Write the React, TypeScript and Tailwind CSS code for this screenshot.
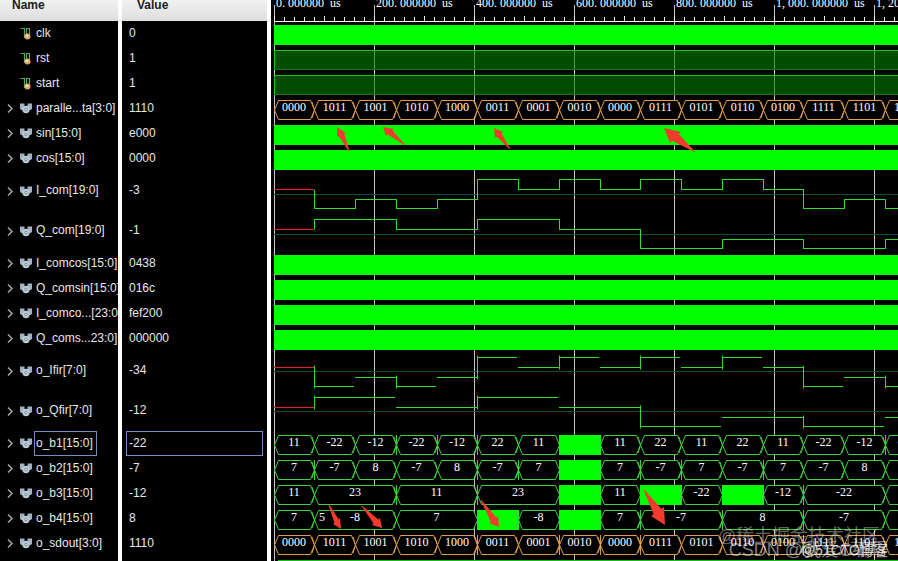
import type { ReactNode } from 'react';

const GREEN = '#00ff00';
const TRACE = '#3fd03f';
const ORANGE = '#dc9c48';

// Horizontal positions (px) where the symbols change.
const EDGES = [0, 40, 81, 122, 163, 203, 244, 285, 326, 366, 407, 448, 489, 529, 570, 611, 652];

interface Cell {
  // number of symbols the value is held for
  span: number;
  text?: string;
  burst?: boolean;
}

interface Signal {
  name: string;
  value: string;
  kind: 'clock' | 'high' | 'bus' | 'analog';
  scalar?: boolean;
  selected?: boolean;
  color?: string;
  cells?: Cell[];
  glitches?: number[];
  levels?: number[];
  breaks?: number[];
  offset?: number;
  note?: { x: number; text: string };
}

// '*' marks a burst of changes, 'value:n' holds a value for n symbols
function parseCells(source: string): Cell[] {
  return source.split(' ').map((item) => {
    const [text, span] = item.split(':');
    return text === '*' ? { span: 1, burst: true } : { span: Number(span ?? 1), text };
  });
}

const SYMBOLS = '0000 1011 1001 1010 1000 0011 0001 0010 0000 0111 0101 0110 0100 1111 1101 1110';
const I_LEVELS = [18, 37, 28, 37, 28, 8, 18, 8, 18, 8, 18, 8, 18, 37, 28, 37];
const Q_LEVELS = [18, 8, 8, 18, 18, 8, 8, 18, 18, 37, 37, 28, 28, 37, 37, 28];

const signals: Signal[] = [
  { name: 'clk', value: '0', kind: 'clock', scalar: true },
  { name: 'rst', value: '1', kind: 'high', scalar: true },
  { name: 'start', value: '1', kind: 'high', scalar: true },
  { name: 'paralle...ta[3:0]', value: '1110', kind: 'bus', color: ORANGE, cells: parseCells(SYMBOLS) },
  { name: 'sin[15:0]', value: 'e000', kind: 'clock' },
  { name: 'cos[15:0]', value: '0000', kind: 'clock' },
  { name: 'I_com[19:0]', value: '-3', kind: 'analog', levels: I_LEVELS },
  { name: 'Q_com[19:0]', value: '-1', kind: 'analog', levels: Q_LEVELS },
  { name: 'I_comcos[15:0]', value: '0438', kind: 'clock' },
  { name: 'Q_comsin[15:0]', value: '016c', kind: 'clock' },
  { name: 'I_comco...[23:0]', value: 'fef200', kind: 'clock' },
  { name: 'Q_coms...23:0]', value: '000000', kind: 'clock' },
  { name: 'o_Ifir[7:0]', value: '-34', kind: 'analog', levels: I_LEVELS, offset: -2, breaks: [81, 163, 244, 326, 407, 489, 570] },
  { name: 'o_Qfir[7:0]', value: '-12', kind: 'analog', levels: Q_LEVELS, offset: -2, breaks: [122, 285, 448, 611] },
  {
    name: 'o_b1[15:0]', value: '-22', kind: 'bus', selected: true, glitches: [122, 163, 203, 611],
    cells: parseCells('11 -22 -12 -22 -12 22 11 * 11 22 11 22 11 -22 -12 -22'),
  },
  {
    name: 'o_b2[15:0]', value: '-7', kind: 'bus', glitches: [40, 203, 244, 366, 407, 489],
    cells: parseCells('7 -7 8 -7 8 -7 7 * 7 -7 7 -7 7 -7 8 -7'),
  },
  {
    name: 'o_b3[15:0]', value: '-12', kind: 'bus', glitches: [122, 203, 529],
    cells: parseCells('11 23:2 11:2 23:2 * 11 * -22 * -12 -22:2 11'),
  },
  {
    name: 'o_b4[15:0]', value: '8', kind: 'bus', glitches: [366, 448, 529], note: { x: 48, text: '5' },
    cells: parseCells('7 -8:2 7:2 * -8 * 7 -7:2 8:2 -7:2 8'),
  },
  {
    name: 'o_sdout[3:0]', value: '1110', kind: 'bus', color: ORANGE, glitches: [203, 285, 326, 366, 529],
    cells: parseCells(SYMBOLS),
  },
];

const rowHeight = (signal: Signal) => (signal.kind === 'analog' ? 'h-10' : 'h-[25px]');

function ScalarIcon() {
  return (
    <svg width="12" height="13" viewBox="0 0 12 13" className="shrink-0" fill="none">
      <path d="M0.5 1.5H4.5V11M6.5 9V1.5H9.5V8" stroke="#5aa860" strokeWidth="1.2" />
      <circle cx="7.5" cy="9.5" r="3" fill="#e0a868" />
      <circle cx="7" cy="9" r="1.3" fill="#fbe3b8" />
    </svg>
  );
}

function BusIcon() {
  return (
    <svg width="12" height="13" viewBox="0 0 12 13" className="shrink-0">
      <path d="M0 1.5H4.5V8H1.5L0 7ZM7.5 1.5H12V7L10.5 8H7.5Z" fill="#9fb4c0" />
      <circle cx="6" cy="7.5" r="3.7" fill="#bccbd4" />
      <circle cx="6" cy="7.5" r="1.7" fill="#7d919d" />
      <circle cx="6" cy="7.5" r="0.8" fill="#e4ecf0" />
    </svg>
  );
}

function Field({ selected, children }: { selected?: boolean; children: ReactNode }) {
  return (
    <span
      className={`flex h-[25px] grow items-center border pr-[3px] pb-px leading-[15px] whitespace-nowrap ${
        selected ? 'border-[#7290c4]' : 'border-transparent'
      }`}
    >
      {children}
    </span>
  );
}

function NameRow({ signal }: { signal: Signal }) {
  return (
    <li className={`flex items-center pl-[7px] ${rowHeight(signal)}`}>
      <span className="flex w-[13px] shrink-0">
        {!signal.scalar && (
          <button type="button" aria-label={`Expand ${signal.name}`}>
            <svg width="7" height="11" viewBox="0 0 7 11" fill="none" stroke="#a8a8a8" strokeWidth="1.5">
              <path d="M1 1.5L5 5.5L1 9.5" />
            </svg>
          </button>
        )}
      </span>
      {signal.scalar ? <ScalarIcon /> : <BusIcon />}
      <span className="ml-0.5 flex">
        <Field selected={signal.selected}>
          <span className="pl-px">{signal.name}</span>
        </Field>
      </span>
    </li>
  );
}

function ValueRow({ signal }: { signal: Signal }) {
  return (
    <li className={`flex items-center px-1 ${rowHeight(signal)}`}>
      <Field selected={signal.selected}>
        <span className="pl-0.5">{signal.value}</span>
      </Field>
    </li>
  );
}

function BusTrace({ signal }: { signal: Signal }) {
  const color = signal.color ?? TRACE;
  let index = 0;
  return (
    <>
      {signal.cells!.map((cell) => {
        const x1 = EDGES[index];
        index += cell.span;
        const x2 = EDGES[index];
        if (cell.burst) {
          return <rect key={x1} x={x1} y="4" width={x2 - x1 + 1} height="20" fill={GREEN} />;
        }
        return (
          <g key={x1}>
            <path
              d={`M${x1 + 0.5} 14L${x1 + 4.5} 4.5H${x2 - 3.5}L${x2 + 0.5} 14L${x2 - 3.5} 23.5H${x1 + 4.5}Z`}
              fill="#000"
              stroke={color}
            />
            <path
              d={`M${x1 + 0.5} 14L${x1 - 2} 6M${x1 + 0.5} 14L${x1 - 2} 22`}
              stroke={color}
              fill="none"
            />
            <text x={(x1 + x2) / 2} y="15" textAnchor="middle" fill="#fff">
              {cell.text}
            </text>
          </g>
        );
      })}
      {signal.glitches?.map((x) => (
        <path key={x} d={`M${x + 0.5} 4V24`} stroke={color} />
      ))}
      {signal.note && (
        <text x={signal.note.x} y="15" textAnchor="middle" fill="#fff">
          {signal.note.text}
        </text>
      )}
    </>
  );
}

function AnalogTrace({ signal }: { signal: Signal }) {
  const offset = signal.offset ?? 0;
  const overshoot = signal.breaks ? 2 : 0;
  const levels = signal.levels!.map((level) => level + offset + 0.5);
  const zero = signal.breaks ? 20.5 : 23.5;
  let trace = '';
  levels.forEach((y, i) => {
    if (i === 0) return;
    const x = EDGES[i] + 0.5;
    const prev = levels[i - 1];
    if (prev !== y && !signal.breaks?.includes(EDGES[i])) {
      trace += `M${x} ${Math.min(prev, y) - overshoot}V${Math.max(prev, y) + overshoot}`;
    }
    const broken = signal.breaks?.includes(EDGES[i + 1]);
    trace += `M${x - 0.5} ${y}H${EDGES[i + 1] + (broken ? -1 : 1)}`;
  });
  return (
    <g fill="none">
      <path d={`M0 ${zero}H2000`} stroke="#0f5232" />
      <path d={trace} stroke="#30dc30" />
      <path d={`M0 ${levels[0]}H40`} stroke="#f01c28" />
    </g>
  );
}

function WaveRow({ signal }: { signal: Signal }) {
  return (
    <svg className={`block w-full ${rowHeight(signal)}`}>
      {signal.kind === 'clock' && <rect y="4" width="100%" height="20" fill={GREEN} />}
      {signal.kind === 'high' && (
        <>
          <rect y="4" width="100%" height="20" fill="#008000" opacity="0.6" />
          <path d="M0 4.5H2000M0.5 4V24" stroke="#1fc81f" />
          <path d="M0 23.5H2000" stroke="#1e701e" />
        </>
      )}
      {signal.kind === 'bus' && <BusTrace signal={signal} />}
      {signal.kind === 'analog' && <AnalogTrace signal={signal} />}
    </svg>
  );
}

const times = [['0.'], ['200.'], ['400.'], ['600.'], ['800.'], ['1,', '000.'], ['1,', '200.']];

function Ruler() {
  const ticks = Array.from({ length: 140 }, (_, i) => i * 10);
  return (
    <svg className="block h-[21px] w-full overflow-visible">
      {times.map((parts, i) => (
        <text key={i} x={i * 100 + 2} y="7" fill="#fff" xmlSpace="preserve">
          {parts.map((part, j) => (
            <tspan key={part} dx={j ? 3 : 0}>
              {part}
            </tspan>
          ))}
          <tspan dx="3">{'000000 '}</tspan>
          <tspan dx="3">us</tspan>
        </text>
      ))}
      {ticks.map((x) => (
        <path key={x} d={`M${x + 0.5} ${x % 50 ? 17 : 16}V21`} stroke="#eee" />
      ))}
      <path d="M0 21.5H2000" stroke="#fff" />
    </svg>
  );
}

// tip, both barbs and tail of each marker arrow
const arrows = [
  [63, 127, 63, 137, 72, 133, 75, 151],
  [109, 127, 112, 136, 120, 129, 131, 145],
  [220, 128, 221, 138, 229, 132, 236, 149],
  [390, 128, 396, 143, 407, 132, 421, 152],
  [67, 529, 59, 524, 66, 518, 55, 505],
  [108, 528, 98, 525, 106, 518, 88, 506],
  [225, 527, 215, 523, 224, 516, 207, 500],
  [391, 525, 377, 516, 390, 507, 370, 490],
];

function Arrows() {
  return (
    <svg className="pointer-events-none absolute inset-0 h-full w-full">
      {arrows.map(([tx, ty, ax, ay, bx, by, ex, ey]) => {
        const at = (k: number) => `${ax + (bx - ax) * k},${ay + (by - ay) * k}`;
        return (
          <polygon
            key={`${tx}-${ty}`}
            points={`${tx},${ty} ${ax},${ay} ${at(0.2)} ${ex - 0.5},${ey} ${ex + 0.5},${ey} ${at(0.8)} ${bx},${by}`}
            fill="#f23a2e"
          />
        );
      })}
    </svg>
  );
}

export default function App() {
  return (
    <main className="flex min-h-screen overflow-hidden bg-black font-['Liberation_Sans',Arial,sans-serif] text-xs text-[#e8e8e8]">
      <section className="w-[118px] shrink-0 overflow-hidden">
        <h2 className="h-[21px] bg-linear-to-b from-[#f1f1f2] to-[#dededf] pl-3 leading-[10px] font-bold text-[#1c1c1c]">
          Name
        </h2>
        <ul>
          {signals.map((signal) => (
            <NameRow key={signal.name} signal={signal} />
          ))}
        </ul>
      </section>

      <section className="w-[153px] shrink-0 border-x-4 border-white">
        <h2 className="h-[21px] bg-linear-to-b from-[#f1f1f2] to-[#dededf] pl-[15px] leading-[10px] font-bold text-[#1c1c1c]">
          Value
        </h2>
        <ul>
          {signals.map((signal) => (
            <ValueRow key={signal.name} signal={signal} />
          ))}
        </ul>
      </section>

      <section className="min-w-0 flex-1 overflow-hidden pl-[3px] font-['Liberation_Serif',serif]">
        <div className="relative h-full">
          <svg className="absolute inset-0 h-full w-full">
            {Array.from({ length: 14 }, (_, i) => (
              <path key={i} d={`M${i * 100 + 0.5} 5V2000`} stroke="#c4c4c4" />
            ))}
          </svg>
          <div className="relative">
            <Ruler />
            {signals.map((signal) => (
              <WaveRow key={signal.name} signal={signal} />
            ))}
            <svg className="block h-[5px] w-full">
              <path d="M4 4.5H2000" stroke="#12c412" />
            </svg>
          </div>
          <Arrows />
          <div className="pointer-events-none absolute right-[10px] bottom-[4px] font-['Liberation_Sans','Noto_Sans_CJK_SC',sans-serif] whitespace-nowrap">
            <p className="pr-2 text-right text-lg leading-[14px] text-white/40">@稀土掘金技术社区</p>
            <p className="text-right text-lg leading-[14px] text-white/50">CSDN @我爱C编程</p>
            <p className="absolute right-0 bottom-0 text-sm leading-[14px] text-white/80">@51CTO博客</p>
          </div>
        </div>
      </section>
    </main>
  );
}
